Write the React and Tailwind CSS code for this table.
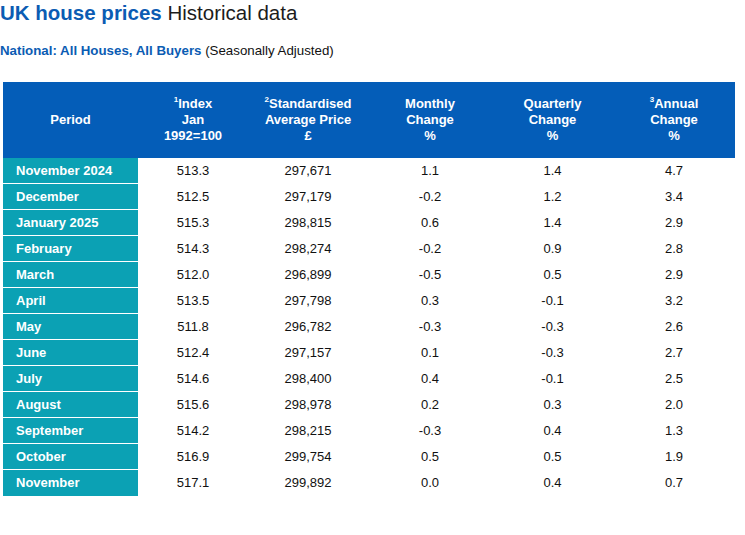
import React from "react";

const rows = [
  ["November 2024", "513.3", "297,671", "1.1", "1.4", "4.7"],
  ["December", "512.5", "297,179", "-0.2", "1.2", "3.4"],
  ["January 2025", "515.3", "298,815", "0.6", "1.4", "2.9"],
  ["February", "514.3", "298,274", "-0.2", "0.9", "2.8"],
  ["March", "512.0", "296,899", "-0.5", "0.5", "2.9"],
  ["April", "513.5", "297,798", "0.3", "-0.1", "3.2"],
  ["May", "511.8", "296,782", "-0.3", "-0.3", "2.6"],
  ["June", "512.4", "297,157", "0.1", "-0.3", "2.7"],
  ["July", "514.6", "298,400", "0.4", "-0.1", "2.5"],
  ["August", "515.6", "298,978", "0.2", "0.3", "2.0"],
  ["September", "514.2", "298,215", "-0.3", "0.4", "1.3"],
  ["October", "516.9", "299,754", "0.5", "0.5", "1.9"],
  ["November", "517.1", "299,892", "0.0", "0.4", "0.7"],
];

const Sup = ({ children }) => (
  <sup className="text-[8px] relative top-[-1px] align-super leading-none">{children}</sup>
);

export default function App() {
  return (
    <div
      className="w-[745px] h-[535px] bg-white overflow-hidden"
      style={{ fontFamily: '"Liberation Sans", Arial, sans-serif' }}
    >
      <div className="pt-[1px] leading-[24px] text-[20.5px] text-[#1c1c1c]">
        <span className="font-bold text-[#0b5cb3]">UK house prices</span> Historical data
      </div>
      <div className="mt-[19px] text-[13.3px] leading-[14px] text-[#111]">
        <span className="font-bold text-[#0b5cb3]">National: All Houses, All Buyers</span> (Seasonally Adjusted)
      </div>
      <div className="ml-[3px] mt-[24px] w-[732px] text-[13px]">
        <div className="grid grid-cols-[135px_110px_120px_124px_121px_122px] h-[76px] bg-[#045db8] text-white font-bold leading-[16px] text-center items-center">
          <div>Period</div>
          <div>
            <div><Sup>1</Sup>Index</div>
            <div>Jan</div>
            <div>1992=100</div>
          </div>
          <div>
            <div><Sup>2</Sup>Standardised</div>
            <div>Average Price</div>
            <div>£</div>
          </div>
          <div>
            <div>Monthly</div>
            <div>Change</div>
            <div>%</div>
          </div>
          <div>
            <div>Quarterly</div>
            <div>Change</div>
            <div>%</div>
          </div>
          <div>
            <div><Sup>3</Sup>Annual</div>
            <div>Change</div>
            <div>%</div>
          </div>
        </div>
        {rows.map((r, i) => (
          <div
            key={i}
            className="grid grid-cols-[135px_110px_120px_124px_121px_122px] h-[26px] items-stretch text-center text-[#111]"
          >
            <div
              className={`bg-[#0ba1b4] text-white font-bold text-left pl-[13px] flex items-center ${
                i < rows.length - 1 ? "border-b border-white" : ""
              }`}
            >
              {r[0]}
            </div>
            {r.slice(1).map((c, j) => (
              <div key={j} className="flex items-center justify-center">
                {c}
              </div>
            ))}
          </div>
        ))}
      </div>
    </div>
  );
}
